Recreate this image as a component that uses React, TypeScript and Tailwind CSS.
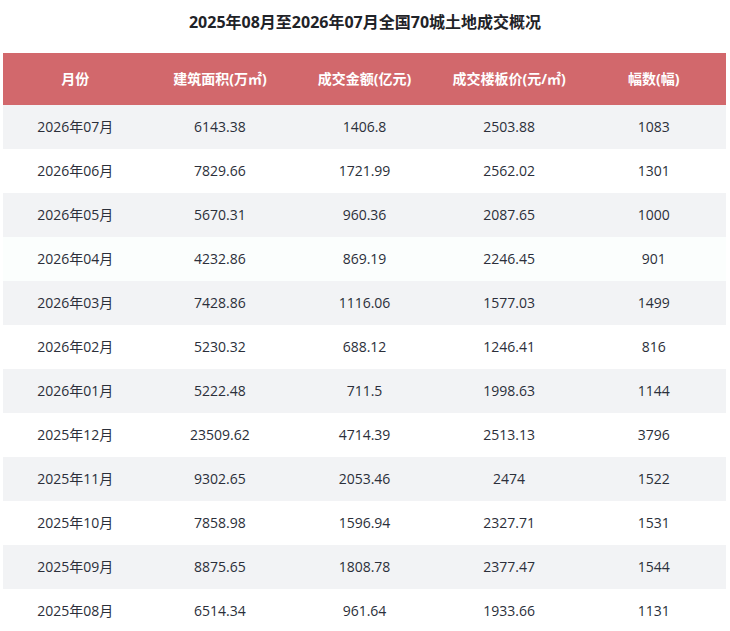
import React from "react";

const rows: [string, string, string, string, string][] = [
  ["2026年07月", "6143.38", "1406.8", "2503.88", "1083"],
  ["2026年06月", "7829.66", "1721.99", "2562.02", "1301"],
  ["2026年05月", "5670.31", "960.36", "2087.65", "1000"],
  ["2026年04月", "4232.86", "869.19", "2246.45", "901"],
  ["2026年03月", "7428.86", "1116.06", "1577.03", "1499"],
  ["2026年02月", "5230.32", "688.12", "1246.41", "816"],
  ["2026年01月", "5222.48", "711.5", "1998.63", "1144"],
  ["2025年12月", "23509.62", "4714.39", "2513.13", "3796"],
  ["2025年11月", "9302.65", "2053.46", "2474", "1522"],
  ["2025年10月", "7858.98", "1596.94", "2327.71", "1531"],
  ["2025年09月", "8875.65", "1808.78", "2377.47", "1544"],
  ["2025年08月", "6514.34", "961.64", "1933.66", "1131"],
];

const headers = ["月份", "建筑面积(万㎡)", "成交金额(亿元)", "成交楼板价(元/㎡)", "幅数(幅)"];

export default function App() {
  return (
    <div
      className="w-[730px] h-[631px] overflow-hidden bg-white"
      style={{ fontFamily: '"Open Sans", "Noto Sans CJK SC", sans-serif' }}
    >
      <div className="pt-[10px] h-[53px] text-center text-[16px] leading-[24px] font-bold text-[#1f2328]">
        2025年08月至2026年07月全国70城土地成交概况
      </div>
      <div className="ml-[3px] w-[723px]">
        <div className="grid grid-cols-5 h-[52px] bg-[#d2686c] items-center">
          {headers.map((h) => (
            <div key={h} className="text-center text-white font-bold text-[14px] leading-[20px] -mt-px">
              {h}
            </div>
          ))}
        </div>
        {rows.map((r, i) => (
          <div
            key={r[0]}
            className={`grid grid-cols-5 h-[44px] items-center ${
              i === 3 ? "bg-[#fbfefd]" : i % 2 === 0 ? "bg-[#f2f3f5]" : "bg-white"
            }`}
          >
            {r.map((c, j) => (
              <div key={j} className="text-center text-[14px] leading-[20px] -mt-px text-[#2b2f3a]">
                {c}
              </div>
            ))}
          </div>
        ))}
      </div>
    </div>
  );
}
